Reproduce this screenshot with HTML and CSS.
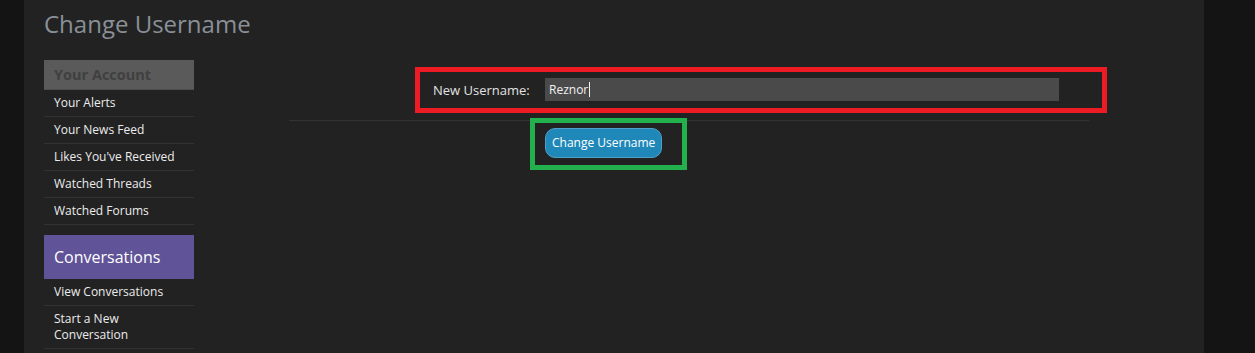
FILE: index.html
```html
<!DOCTYPE html>
<html>
<head>
<meta charset="utf-8">
<link rel="stylesheet" href="styles.css">
</head>
<body>
<div class="page">
  <div class="main">
    <h1 class="title">Change Username</h1>
    <div class="columns">
      <nav class="sidebar">
        <div class="section">
          <div class="section-head account">Your Account</div>
          <a class="item">Your Alerts</a>
          <a class="item">Your News Feed</a>
          <a class="item">Likes You've Received</a>
          <a class="item">Watched Threads</a>
          <a class="item">Watched Forums</a>
        </div>
        <div class="section">
          <div class="section-head convo">Conversations</div>
          <a class="item">View Conversations</a>
          <a class="item">Start a New Conversation</a>
        </div>
      </nav>
      <div class="content">
        <div class="form-row">
          <label class="label">New Username:</label>
          <div class="input"><span>Reznor</span><span class="caret"></span></div>
        </div>
        <div class="separator"></div>
        <div class="submit-row">
          <button class="button">Change Username</button>
        </div>
      </div>
    </div>
  </div>
</div>
</body>
</html>
```

FILE: styles.css
```css
* { box-sizing: border-box; }
html, body { margin: 0; padding: 0; }
body {
  background: #141414;
  font-family: "Open Sans", "DejaVu Sans", sans-serif;
  height: 353px;
  overflow: hidden;
}
.page {
  display: flex;
  height: 353px;
}
.main {
  margin-left: 24px;
  width: 1180px;
  background: #222222;
  padding: 0 20px;
}
.title {
  margin: 0;
  padding-top: 8px;
  height: 60px;
  font-size: 24px;
  font-weight: 400;
  line-height: 32px;
  color: #899097;
}
.columns {
  display: flex;
}
.sidebar {
  width: 150px;
  flex: none;
}
.section { margin-bottom: 10px; }
.section-head {
  padding-left: 10px;
}
.section-head.account {
  height: 30px;
  line-height: 29px;
  background: #5a5a5a;
  color: #404040;
  font-weight: 700;
  font-size: 14.5px;
  border-bottom: 1px solid #4e4e4e;
}
.section-head.convo {
  height: 44px;
  line-height: 44px;
  background: #605397;
  color: #ffffff;
  font-size: 16px;
}
.item {
  display: block;
  padding: 5px 10px 5px 10px;
  line-height: 16px;
  font-size: 12px;
  color: #ececec;
  border-bottom: 1px solid #333333;
}
.content {
  flex: 1;
  margin-left: 20px;
  padding-right: 20px;
  padding-top: 7px;
}
.form-row {
  margin-left: 201px;
  width: 692px;
  border: 5px solid #ed1c24;
  padding: 6px 43px 7px 13px;
  display: flex;
  align-items: center;
}
.label {
  width: 112px;
  flex: none;
  font-size: 13px;
  color: #e2e2e2;
}
.input {
  flex: 1;
  height: 23px;
  background: #4a4a4a;
  font-size: 12px;
  color: #f2f2f2;
  padding-left: 4px;
  display: flex;
  align-items: center;
}
.caret {
  display: inline-block;
  width: 1px;
  height: 15px;
  background: #f2f2f2;
  margin-left: 1px;
}
.separator {
  margin: 7px auto 0;
  width: 800px;
  height: 1px;
  background: #333333;
}
.submit-row {
  margin-top: 7px;
  padding-left: 331px;
}
.button {
  position: relative;
  height: 30px;
  padding: 0 6px;
  border: 1px solid #4f9fc7;
  border-radius: 10px;
  background: #1f88b9;
  color: #ffffff;
  font-family: "Open Sans", "DejaVu Sans", sans-serif;
  font-size: 12px;
  line-height: 28px;
}
.button::after {
  content: "";
  position: absolute;
  top: -11px;
  left: -16px;
  right: -26px;
  bottom: -13px;
  border: 5px solid #22b14c;
}
```
